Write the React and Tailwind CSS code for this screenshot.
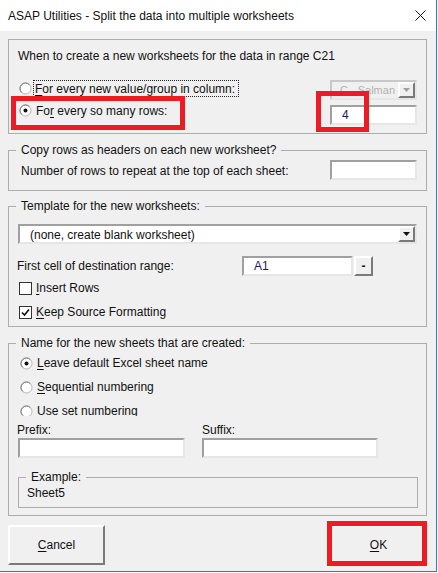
import React from "react";

function Radio({ checked }) {
  return (
    <svg width="13" height="13" viewBox="0 0 13 13" className="shrink-0">
      <circle cx="6.5" cy="6.5" r="5.5" fill="#fff" stroke="#b5b5b5" />
      <path d="M2.6 10.4 A5.5 5.5 0 0 1 10.4 2.6" fill="none" stroke="#7a7a7a" />
      {checked && <circle cx="6.5" cy="6.5" r="2" fill="#111" />}
    </svg>
  );
}

function Check({ checked }) {
  return (
    <div className="w-[13px] h-[13px] shrink-0 border border-[#333] bg-white flex items-center justify-center">
      {checked && (
        <svg width="9" height="9" viewBox="0 0 9 9">
          <path d="M1 4.5 L3.5 7 L8 1.5" fill="none" stroke="#111" strokeWidth="1.6" />
        </svg>
      )}
    </div>
  );
}

const sunken = "border-2 border-t-[#a0a0a0] border-l-[#a0a0a0] border-r-[#e6e6e6] border-b-[#e6e6e6]";
const raised = "border-2 border-t-white border-l-white border-r-[#7a7a7a] border-b-[#7a7a7a] bg-[#f0f0f0]";

function DropBtn({ disabled }) {
  return (
    <div className={`w-[17px] h-[16px] ${raised} flex items-center justify-center shrink-0`}>
      <svg width="7" height="4" viewBox="0 0 7 4">
        <path d="M0 0 H7 L3.5 4 Z" fill={disabled ? "#a0a0a0" : "#111"} />
      </svg>
    </div>
  );
}

function Group({ title, className = "", children }) {
  return (
    <fieldset className={`border border-[#adadad] ${className}`}>
      {title && <legend className="ml-[7px] px-[5px]">{title}</legend>}
      {children}
    </fieldset>
  );
}

function Acc({ children }) {
  return <u className="underline underline-offset-[2px]">{children}</u>;
}

function Option({ type = "radio", checked, children, className = "" }) {
  return (
    <div className={`flex items-center gap-[4px] ${className}`}>
      {type === "radio" ? <Radio checked={checked} /> : <Check checked={checked} />}
      <span>{children}</span>
    </div>
  );
}

export default function App() {
  return (
    <div className="relative w-[438px] h-[573px] bg-white text-[12px] leading-[14px] text-[#111] font-['Liberation_Sans',Arial,sans-serif]">
      <div className="w-[437px] h-[572px] bg-[#f0f0f0] border-r border-b border-[#1e7fd8] flex flex-col">
        <div className="h-[31px] bg-white flex items-center justify-between pl-[8px] pr-[10px] shrink-0">
          <span className="pt-[1px]">ASAP Utilities - Split the data into multiple worksheets</span>
          <svg width="11" height="11" viewBox="0 0 11 11">
            <path d="M0.5 0.5 L10.5 10.5 M10.5 0.5 L0.5 10.5" stroke="#111" strokeWidth="1" />
          </svg>
        </div>

        <div className="flex-1 flex flex-col pl-[8px] pr-[9px] pt-[8px]">
          {/* when to split */}
          <div className="border border-[#adadad] pt-[9px] pb-[8px]">
            <div className="pl-[9px]">When to create a new worksheets for the data in range C21</div>
            <div className="mt-[17px] flex justify-between pr-[9px]">
              <div className="flex flex-col gap-[5px] pl-[10px]">
                <div className="h-[17px] flex items-center gap-[1px]">
                  <Radio />
                  <span className="border border-dotted border-[#222] h-[17px] flex items-center px-[1px] pr-[3px]">
                    <Acc>F</Acc>or every new value/group in column:
                  </span>
                </div>
                <div className="h-[17px] flex items-center gap-[4px]">
                  <Radio checked />
                  <span>
                    Fo<Acc>r</Acc> every so many rows:
                  </span>
                </div>
              </div>
              <div className="w-[87px] flex flex-col gap-[5px]">
                <div className={`h-[20px] ${sunken} border-t-[#c8c8c8] border-l-[#c8c8c8] bg-[#f0f0f0] flex items-center justify-between`}>
                  <span className="pl-[8px] text-[11px] text-[#b0b0b0] whitespace-nowrap">C - Salman</span>
                  <DropBtn disabled />
                </div>
                <div className={`h-[20px] ${sunken} bg-white flex items-center pl-[10px] text-[#1a1a5a]`}>4</div>
              </div>
            </div>
          </div>

          {/* header rows */}
          <Group title="Copy rows as headers on each new worksheet?" className="mt-[9px] pb-[10px]">
            <div className="mt-[3px] flex items-center justify-between pl-[12px] pr-[9px]">
              <span className="pt-[1px]">Number of rows to repeat at the top of each sheet:</span>
              <div className={`w-[87px] h-[20px] ${sunken} bg-white`} />
            </div>
          </Group>

          {/* template */}
          <Group title="Template for the new worksheets:" className="mt-[8px] pb-[6px]">
            <div className={`mt-[11px] ml-[9px] mr-[9px] h-[20px] ${sunken} bg-white flex items-center justify-between`}>
              <span className="pl-[10px] pt-[1px]">(none, create blank worksheet)</span>
              <DropBtn />
            </div>
            <div className="mt-[12px] flex items-center pl-[8px]">
              <span className="w-[225px]">First cell of destination range:</span>
              <div className={`w-[111px] h-[20px] ${sunken} bg-white flex items-center pl-[10px] text-[#1a1a5a]`}>A1</div>
              <div className={`ml-[1px] w-[19px] h-[20px] ${raised} flex items-center justify-center font-bold leading-none`}>-</div>
            </div>
            <Option type="check" className="mt-[4px] h-[16px] pl-[10px]">
              <Acc>I</Acc>nsert Rows
            </Option>
            <Option type="check" checked className="mt-[8px] h-[16px] pl-[10px]">
              <Acc>K</Acc>eep Source Formatting
            </Option>
          </Group>

          {/* naming */}
          <Group title="Name for the new sheets that are created:" className="mt-[9px] pb-[7px]">
            <div className="mt-[5px] flex flex-col gap-[8px] pl-[11px]">
              <Option checked className="h-[16px]">
                <Acc>L</Acc>eave default Excel sheet name
              </Option>
              <Option className="h-[16px]">
                <Acc>S</Acc>equential numbering
              </Option>
              <div className="h-[13px] overflow-hidden">
                <Option className="h-[16px]">Use set numbering</Option>
              </div>
            </div>
            <div className="mt-[7px] flex pl-[9px] gap-[17px]">
              <div className="w-[167px] flex flex-col gap-[1px]">
                <span className="-ml-[1px]">Prefix:</span>
                <div className={`h-[20px] ${sunken} bg-white`} />
              </div>
              <div className="w-[176px] flex flex-col gap-[1px]">
                <span>Suffix:</span>
                <div className={`h-[20px] ${sunken} bg-white`} />
              </div>
            </div>
            <Group title="Example:" className="mt-[12px] ml-[9px] w-[400px] pb-[7px]">
              <div className="mt-[2px] pl-[8px]">Sheet5</div>
            </Group>
          </Group>

          <div className="mt-[9px] flex justify-between">
            <div className={`w-[97px] h-[40px] ${raised} flex items-center justify-center`}>
              <span>
                <Acc>C</Acc>ancel
              </span>
            </div>
            <div className={`w-[97px] h-[40px] ${raised} flex items-center justify-center`}>
              <span>
                <Acc>O</Acc>K
              </span>
            </div>
          </div>
        </div>
      </div>

      {/* red annotation boxes */}
      <div className="absolute left-[11px] top-[96px] w-[174px] h-[34px] border-[5px] border-[#ed1c24]" />
      <div className="absolute left-[316px] top-[91px] w-[53px] h-[41px] border-[5px] border-[#ed1c24]" />
      <div className="absolute left-[327px] top-[521px] w-[100px] h-[45px] border-[5px] border-[#ed1c24]" />
    </div>
  );
}
